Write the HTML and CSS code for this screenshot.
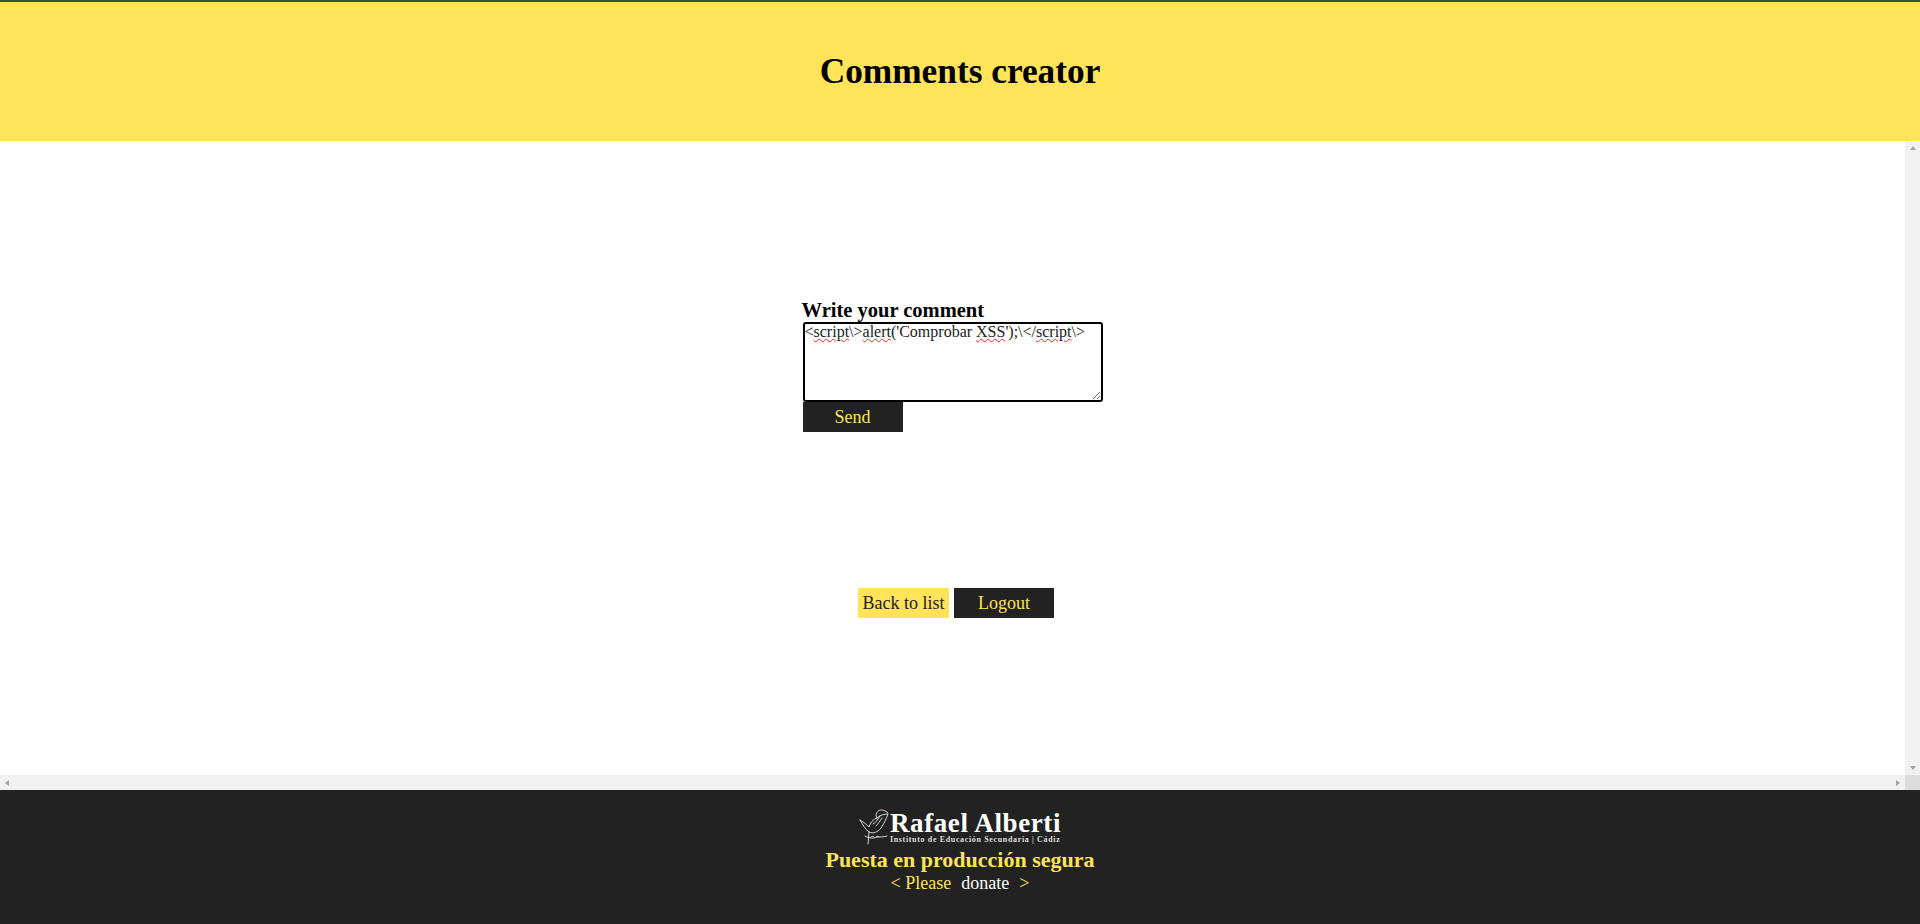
FILE: index.html
```html
<!DOCTYPE html>
<html lang="en">
<head>
<meta charset="utf-8">
<title>Comments creator</title>
<link rel="stylesheet" href="styles.css">
</head>
<body>
<header class="top">
  <h1 class="title">Comments creator</h1>
</header>
<div class="viewport">
  <main class="content">
    <form class="comment-form">
      <label class="comment-label">Write your comment</label>
      <div class="comment-box" contenteditable="true" spellcheck="false">&lt;<span class="typo">script</span>\&gt;<span class="typo">alert</span>('Comprobar <span class="typo">XSS</span>');\&lt;/<span class="typo">script</span>\&gt;</div>
      <button type="button" class="btn btn-dark">Send</button>
    </form>
    <nav class="actions">
      <a class="btn btn-light" href="#">Back to list</a>
      <a class="btn btn-dark" href="#">Logout</a>
    </nav>
  </main>
  <div class="scroll-v">
    <span class="arrow arrow-up"></span>
    <span class="arrow arrow-down"></span>
  </div>
  <div class="scroll-h">
    <span class="arrow arrow-left"></span>
    <span class="arrow arrow-right"></span>
  </div>
  <div class="scroll-corner"></div>
</div>
<footer class="bottom">
  <div class="logo">
    <svg class="dove" viewBox="0 0 30 36" width="30" height="36" fill="none" stroke="#fff" stroke-width="0.8" stroke-linecap="round" stroke-linejoin="round">
      <path d="M1 11c3 5 5 9 9 12 4 2 9 0 12-4 3-4 5-9 7-14-4 0-8 1-11 4"/>
      <path d="M18 9c-2-3-1-6 3-8 2 0 5 0 8 3"/>
      <path d="M18 9c-4 1-7 5-8 9-2-2-5-5-9-7"/>
      <path d="M14 15c2-1 5-4 7-8M17 17c2-2 4-5 6-8"/>
      <path d="M10 23l-1 12M6 27c3 2 8 3 12 1 4 0 7 0 10-1"/>
      <path d="M12 28c1-1 2-1 3 0M17 28c1-1 2-1 3 0"/>
    </svg>
    <div class="logo-text">
      <span class="logo-name">Rafael Alberti</span>
      <span class="logo-sub">Instituto de Educación Secundaria | Cádiz</span>
    </div>
  </div>
  <div class="project">Puesta en producción segura</div>
  <div class="donate"><span class="accent">&lt; Please</span><a class="donate-link" href="#">donate</a><span class="accent">&gt;</span></div>
</footer>
</body>
</html>
```
FILE: styles.css
```css
* { box-sizing: border-box; }
html, body { height: 100%; }
body {
  margin: 0;
  height: 924px;
  display: flex;
  flex-direction: column;
  overflow: hidden;
  font-family: "Liberation Serif", "DejaVu Serif", serif;
  background: #fff;
  color: #000;
}
.top {
  height: 141px;
  flex: none;
  border-top: 2px solid #3f4a4f;
  background: #ffe358;
  display: flex;
  align-items: center;
  justify-content: center;
}
.title {
  margin: 0;
  font-size: 35.3px;
  font-weight: 700;
  line-height: 44px;
}
.viewport {
  flex: 1;
  min-height: 0;
  display: grid;
  grid-template-columns: 1fr 15px;
  grid-template-rows: 1fr 15px;
}
.content {
  display: flex;
  flex-direction: column;
  align-items: center;
  padding-top: 158px;
}
.comment-form {
  width: 300px;
  display: flex;
  flex-direction: column;
  align-items: flex-start;
}
.comment-label {
  font-size: 20.5px;
  font-weight: 700;
  line-height: 23px;
  margin-left: -1px;
}
.comment-box {
  width: 300px;
  height: 80px;
  border: 2px solid #000;
  border-radius: 3px;
  resize: both;
  overflow: auto;
  font-size: 16px;
  line-height: 16px;
  padding: 0;
  white-space: nowrap;
  color: #222;
  outline: none;
}
.typo {
  text-decoration: underline wavy #f22 1px;
}
.btn {
  display: inline-flex;
  align-items: center;
  justify-content: center;
  height: 30px;
  border: 0;
  padding: 0;
  font-family: inherit;
  font-size: 18px;
  text-decoration: none;
}
.btn-dark {
  width: 100px;
  background: #222;
  color: #ffe358;
}
.btn-light {
  width: 91px;
  background: #ffe358;
  color: #222;
}
.actions {
  display: flex;
  gap: 5px;
  margin-top: 156px;
  margin-left: 7px;
}
.scroll-v, .scroll-h {
  background: #f1f1f1;
  display: flex;
  justify-content: space-between;
  align-items: center;
}
.scroll-v { flex-direction: column; padding: 5px 0; }
.scroll-h { padding: 0 5px; }
.scroll-corner { background: #dcdcdc; }
.arrow { width: 0; height: 0; display: block; border-style: solid; border-color: transparent; }
.arrow-up { border-width: 0 3.5px 4px; border-bottom-color: #a3a3a3; }
.arrow-down { border-width: 4px 3.5px 0; border-top-color: #a3a3a3; }
.arrow-left { border-width: 3.5px 4px 3.5px 0; border-right-color: #a3a3a3; }
.arrow-right { border-width: 3.5px 0 3.5px 4px; border-left-color: #a3a3a3; }
.bottom {
  height: 134px;
  flex: none;
  background: #222;
  display: flex;
  flex-direction: column;
  align-items: center;
  padding-top: 19px;
  color: #ffe358;
}
.logo {
  display: flex;
  align-items: flex-start;
  height: 36px;
  color: #fff;
  gap: 1px;
}
.logo-text { display: flex; flex-direction: column; padding-top: 2px; }
.logo-name {
  font-size: 27px;
  line-height: 24px;
  font-weight: 700;
  letter-spacing: 0.6px;
}
.logo-sub {
  font-size: 8px;
  line-height: 9px;
  font-weight: 700;
  color: #ddd;
  letter-spacing: 0.65px;
  white-space: nowrap;
}
.project {
  font-size: 22px;
  font-weight: 700;
  line-height: 26px;
  margin-top: 2px;
}
.donate {
  font-size: 18px;
  line-height: 20px;
  margin-top: 0;
  display: flex;
}
.donate-link { color: #fff; text-decoration: none; margin: 0 10px; }
.accent { color: #ffe358; }
```
